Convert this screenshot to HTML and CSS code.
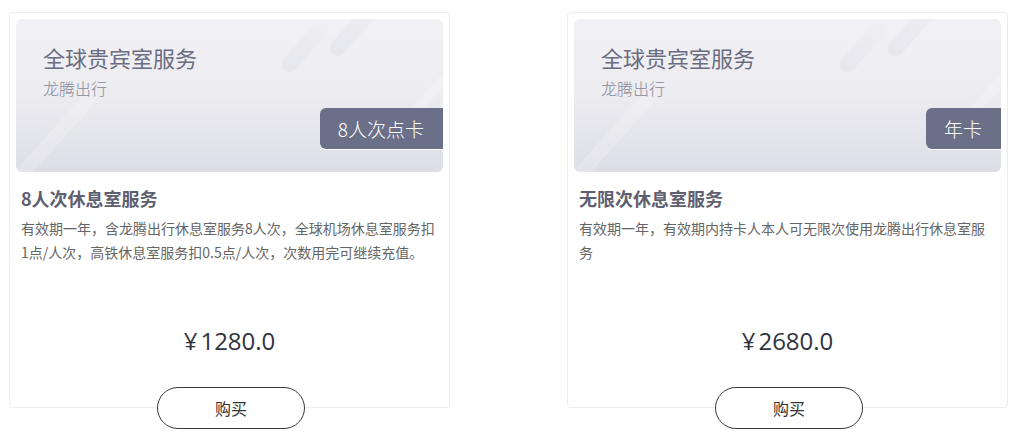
FILE: index.html
```html
<!DOCTYPE html>
<html lang="zh-CN">
<head>
<meta charset="utf-8">
<title>全球贵宾室服务</title>
<link rel="stylesheet" href="styles.css">
</head>
<body>
<div class="cards">
  <div class="card">
    <div class="banner">
      <span class="deco deco1"></span>
      <span class="deco deco2"></span>
      <span class="deco deco3"></span>
      <span class="deco deco4"></span>
      <div class="banner-title">全球贵宾室服务</div>
      <div class="banner-sub">龙腾出行</div>
      <div class="badge">8人次点卡</div>
    </div>
    <h3 class="name">8人次休息室服务</h3>
    <p class="desc">有效期一年，含龙腾出行休息室服务8人次，全球机场休息室服务扣1点/人次，高铁休息室服务扣0.5点/人次，次数用完可继续充值。</p>
    <div class="price"><span class="yen">¥</span>1280.0</div>
    <button class="buy">购买</button>
  </div>
  <div class="card">
    <div class="banner">
      <span class="deco deco1"></span>
      <span class="deco deco2"></span>
      <span class="deco deco3"></span>
      <span class="deco deco4"></span>
      <div class="banner-title">全球贵宾室服务</div>
      <div class="banner-sub">龙腾出行</div>
      <div class="badge">年卡</div>
    </div>
    <h3 class="name">无限次休息室服务</h3>
    <p class="desc">有效期一年，有效期内持卡人本人可无限次使用龙腾出行休息室服务</p>
    <div class="price"><span class="yen">¥</span>2680.0</div>
    <button class="buy">购买</button>
  </div>
</div>
</body>
</html>
```
FILE: styles.css
```css
* { box-sizing: border-box; }
html, body { margin: 0; padding: 0; background: #fff; }
body {
  min-height: 434px;
  font-family: "Noto Sans CJK SC", "Liberation Sans", sans-serif;
  color: #333;
}
.cards {
  display: flex;
  align-items: flex-start;
  gap: 117px;
  padding: 12px 0 26px 9px;
}
.card {
  width: 441px;
  border: 1px solid #ececec;
  border-radius: 4px;
  padding: 6px 6px 0 6px;
  display: flex;
  flex-direction: column;
  background: #fff;
  height: 396px;
}
.banner {
  position: relative;
  overflow: hidden;
  height: 153px;
  flex: none;
  border-radius: 6px;
  background: linear-gradient(180deg, #f1f1f5 0%, #ececf1 50%, #dddde6 100%);
  padding: 24px 0 0 27px;
  display: flex;
  flex-direction: column;
}
.deco {
  position: absolute;
  border-radius: 9px;
  transform: rotate(-48deg);
}
.deco1 {
  left: 258px; top: 20px; width: 62px; height: 16px;
  background: linear-gradient(90deg, rgba(222,222,232,0.45), rgba(228,228,236,0.15));
}
.deco2 {
  left: 306px; top: 4px; width: 62px; height: 16px;
  background: linear-gradient(90deg, rgba(222,222,232,0.5), rgba(228,228,236,0.2));
}
.deco3 {
  left: 360px; top: 70px; width: 110px; height: 10px;
  background: rgba(255,255,255,0.22);
}
.deco4 {
  left: -20px; top: 110px; width: 120px; height: 14px;
  background: rgba(255,255,255,0.2);
}
.banner-title {
  position: relative;
  font-size: 22px;
  line-height: 28px;
  font-weight: 400;
  color: #6a6d80;
}
.banner-sub {
  position: relative;
  margin-top: 6px;
  font-size: 16px;
  line-height: 22px;
  font-weight: 300;
  color: #878999;
}
.badge {
  position: relative;
  align-self: flex-end;
  margin-top: 9px;
  height: 41px;
  line-height: 41px;
  padding: 0 19px 0 18px;
  font-size: 19px;
  font-weight: 300;
  color: #fff;
  background: #6b7089;
  border-radius: 6px 0 0 6px;
  box-shadow: 0 1px 0 rgba(255,255,255,0.95);
}
.name {
  margin: 14px 0 0 5px;
  font-size: 18px;
  line-height: 24px;
  font-weight: bold;
  color: #5e6070;
}
.desc {
  margin: 6px 0 0 5px;
  width: 417px;
  font-size: 14px;
  line-height: 24px;
  color: #666;
}
.price {
  margin-top: auto;
  text-align: center;
  font-family: "Open Sans", "Noto Sans CJK SC", sans-serif;
  font-size: 24px;
  line-height: 32px;
  color: #2f3440;
}
.yen { margin-right: 3px; }
.buy {
  flex: none;
  align-self: center;
  margin: 30px 0 -22px 3px;
  width: 148px;
  height: 42px;
  border: 1px solid #3a3a3a;
  border-radius: 21px;
  background: #fff;
  font-family: "Noto Sans CJK SC", sans-serif;
  font-size: 16px;
  color: #333;
  padding: 0;
}
```
